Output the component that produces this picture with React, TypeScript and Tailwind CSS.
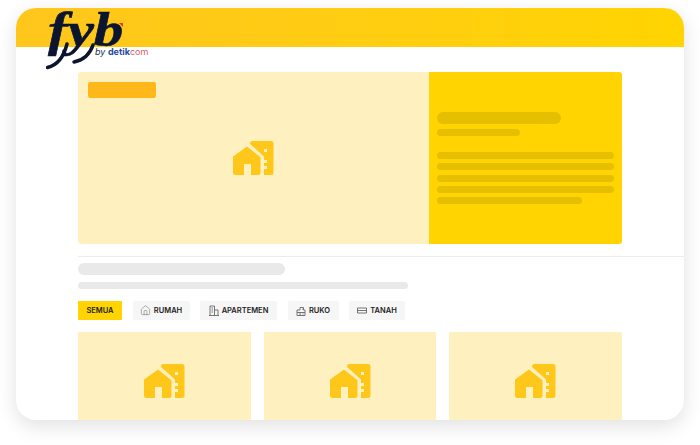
import { House } from 'lucide-react'

function HouseMark() {
  return (
    <svg width="41" height="34" viewBox="0 0 41 34" fill="#ffc71a">
      <path
        fillRule="evenodd"
        d="M17 3V2.500A2.500 2.500 0 0 1 19.500 0H38a2.500 2.500 0 0 1 2.500 2.500v29A2.500 2.500 0 0 1 38 34h-7v-6h3v-3h-3v-3h3v-3h-3v-3.500zM31 8v3h3V8z"
      />
      <path d="M14 5.500l13.500 10.700V31.500a2.500 2.500 0 0 1-2.500 2.500h-7V23h-7v11H2.500A2.500 2.500 0 0 1 0 31.500V15.500z" />
    </svg>
  )
}

function ApartmentIcon() {
  return (
    <svg width="10" height="11" viewBox="0 0 10 11" fill="none" stroke="#666" strokeWidth="0.9">
      <path d="M1 10.500V1h4.500v9.500M5.500 5H9v5.500M0 10.500h10M2.500 3h1.500M2.500 5h1.500M2.500 7h1.500" />
    </svg>
  )
}

function ShopIcon() {
  return (
    <svg width="10" height="10" viewBox="0 0 10 10" fill="none" stroke="#666" strokeWidth="0.9">
      <path d="M1 9.500V4h3V1.500h3.500V4H9v5.500zM1 6.500h8M4 6.500v3M6 3.200h0.800M6.500 8h1" />
    </svg>
  )
}

function LandIcon() {
  return (
    <svg width="10" height="7" viewBox="0 0 10 7" fill="none" stroke="#666" strokeWidth="0.9">
      <path d="M0.500 1h9v5h-9zM0.500 3.500h9" />
    </svg>
  )
}

function Tab({ label, icon, width }: { label: string; icon?: React.ReactNode; width: string }) {
  return (
    <div
      className={`h-[19px] flex items-center justify-center gap-[3px] text-[7.5px] font-semibold text-[#222] ${width} ${
        icon ? 'bg-[#f6f6f6] rounded-[2px]' : 'bg-[#ffd400]'
      }`}
    >
      {icon}
      {label}
    </div>
  )
}

function ListingCard() {
  return (
    <div className="flex-1 h-[88px] bg-[#fff1bf] flex justify-center pt-[32px]">
      <HouseMark />
    </div>
  )
}

export default function App() {
  return (
    <div className="w-[700px] h-[445px] bg-white pt-2 px-4 font-['Inter',sans-serif]">
      <div className="relative w-[668px] h-[412px]">
        <div className="w-full h-full rounded-[20px] bg-white overflow-hidden shadow-[0_6px_20px_rgba(0,0,0,0.12)]">
          {/* Header */}
          <div className="h-[39px] bg-gradient-to-r from-[#ffc61c] to-[#ffd400]" />

          <div className="px-[62px] pt-[25px]">
            {/* Hero */}
            <div className="flex h-[172px] rounded-[3px] overflow-hidden">
              <div className="relative w-[351px] bg-[#fff1bf] flex items-center justify-center">
                <div className="absolute left-[10px] top-[10px] w-[68px] h-[16px] rounded-[2px] bg-[#ffb81a]" />
                <HouseMark />
              </div>
              <div className="flex-1 bg-[#ffd400] px-2 pt-[40px]">
                <div className="w-[124px] h-[12px] rounded-full bg-[#e6bf00]" />
                <div className="w-[83px] h-[7px] rounded-full bg-[#e6bf00] mt-[5px]" />
                <div className="flex flex-col gap-[4.250px] mt-[16px]">
                  <div className="h-[7px] rounded-full bg-[#e6bf00]" />
                  <div className="h-[7px] rounded-full bg-[#e6bf00]" />
                  <div className="h-[7px] rounded-full bg-[#e6bf00]" />
                  <div className="h-[7px] rounded-full bg-[#e6bf00]" />
                  <div className="w-[145px] h-[7px] rounded-full bg-[#e6bf00]" />
                </div>
              </div>
            </div>
          </div>

          <div className="ml-[62px] mt-[12px] border-t border-[#ececec] pt-[6px]">
            <div className="w-[207px] h-[12px] rounded-full bg-[#e9e9e9]" />
            <div className="w-[330px] h-[7px] rounded-full bg-[#e9e9e9] mt-[7px]" />

            {/* Tabs */}
            <div className="flex gap-[10.500px] mt-[12px]">
              <Tab label="SEMUA" width="w-[44px]" />
              <Tab label="RUMAH" width="w-[57px]" icon={<House size={11} strokeWidth={1.1} className="text-[#666]" />} />
              <Tab label="APARTEMEN" width="w-[77px]" icon={<ApartmentIcon />} />
              <Tab label="RUKO" width="w-[51px]" icon={<ShopIcon />} />
              <Tab label="TANAH" width="w-[56px]" icon={<LandIcon />} />
            </div>
          </div>

          {/* Listing */}
          <div className="flex gap-[13px] w-[544px] ml-[62px] mt-[12px]">
            <ListingCard />
            <ListingCard />
            <ListingCard />
          </div>
        </div>

        {/* Logo, hangs over the header */}
        <div className="absolute left-[30px] top-[2px] w-[110px] h-[60px]">
          <svg className="absolute left-0 top-[30px]" width="50" height="30" viewBox="0 0 50 30" fill="none" stroke="#0b1530" strokeLinecap="round">
            <path d="M21 4C18 16 12 25 1.500 27.500" strokeWidth="3.500" />
            <path d="M47 5C44 14 38 20 28 22" strokeWidth="3.500" />
          </svg>
          <span className="absolute left-[2px] top-[5px] origin-left scale-x-[1.230] font-['Liberation_Serif',serif] italic font-bold text-[48px] leading-[30px] [-webkit-text-stroke:0.6px_#0b1530] text-[#0b1530]">
            fyb
          </span>
          <span className="absolute left-[73px] top-[13px] w-0 h-0 border-l-[4px] border-t-[4px] border-l-transparent border-t-[#e5391f]" />
          <span className="absolute left-[49px] top-[37px] whitespace-nowrap text-[9px] leading-[10px] text-[#26324f]">
            <i>by </i>
            <b className="text-[#1d4a9c]">detik</b>
            <span className="text-[#d9606a]">com</span>
          </span>
        </div>
      </div>
    </div>
  )
}
